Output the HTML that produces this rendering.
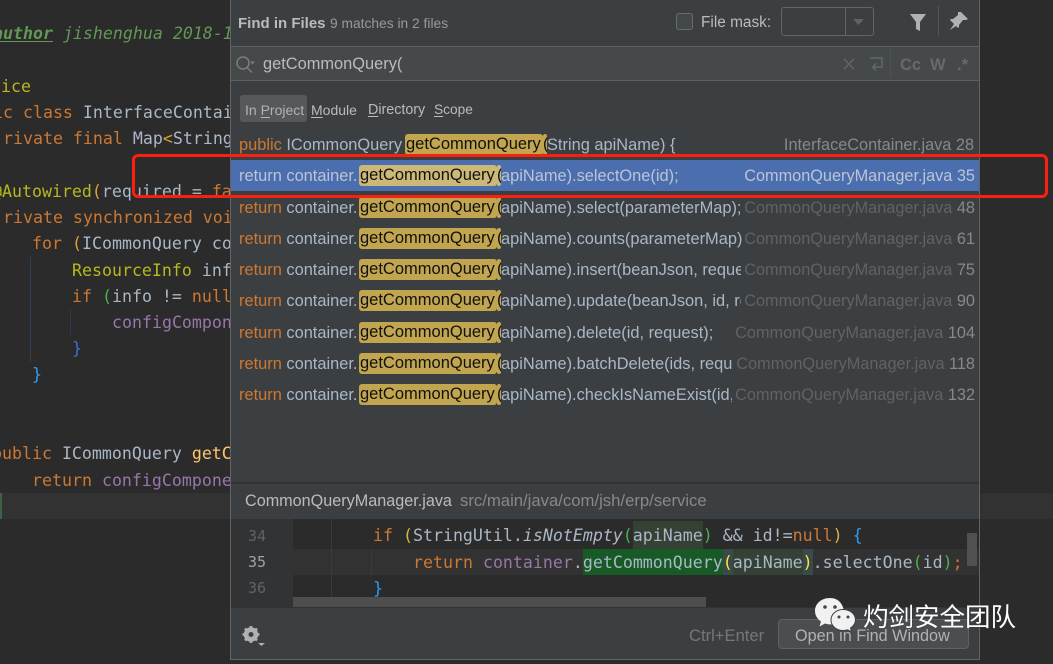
<!DOCTYPE html>
<html><head><meta charset="utf-8"><style>
*{margin:0;padding:0;box-sizing:border-box}
html,body{width:1053px;height:664px;overflow:hidden;background:#2b2b2b}
body{position:relative;font-family:"Liberation Sans",sans-serif}
.a,.c,.u,.r,.h{position:absolute;white-space:pre}
.c{font:16.6px/28px "DejaVu Sans Mono","Liberation Mono",monospace;color:#a9b7c6}
.u{font-size:16.4px;line-height:26px;color:#a9b7c6}
.r{font-size:16.3px;line-height:26px;color:#888;text-align:right}
.h{background:#c2a54f;border-radius:3px;color:#111;font-size:16.5px;line-height:21px;height:21px;padding-left:1px}
.h.q{padding-left:0;overflow:hidden}
.o{color:#cc7832}.y{color:#b8b81e}.p{color:#9876aa}.g{color:#629755}.m{color:#ffc66d}
u{text-underline-offset:2px}
</style></head><body>
<div class="a" style="left:0;top:493px;width:1053px;height:26px;background:#323232"></div>
<div class="a" style="left:0;top:493px;width:2px;height:26px;background:#40604a"></div>
<div class="a" style="left:30px;top:257px;width:1px;height:105px;background:#2f4050"></div>
<div class="a" style="left:70px;top:309px;width:1px;height:26px;background:#2f3a50"></div>

<div class="c g" style="left:-7px;top:20px;font-style:italic"><u style="font-weight:bold">author</u> jishenghua 2018-1</div>
<div class="c y" style="left:-19px;top:73px"> vice</div>
<div class="c" style="left:-7px;top:99px"><span class="o">ic class</span> InterfaceContai</div>
<div class="c" style="left:3px;top:125px"><span class="o">rivate final</span> Map<span style="color:#d4a72c">&lt;</span>String</div>
<div class="c" style="left:-8px;top:178px"><span class="y">@Autowired</span><span style="color:#e0a030">(</span>required = <span class="o">fa</span></div>
<div class="c o" style="left:3px;top:204px">rivate synchronized voi</div>
<div class="c" style="left:32px;top:230px"><span class="o">for</span> <span style="color:#e0a030">(</span>ICommonQuery co</div>
<div class="c" style="left:72px;top:257px"><span class="y">ResourceInfo</span> inf</div>
<div class="c" style="left:72px;top:283px"><span class="o">if</span> <span style="color:#4caf50">(</span>info != <span class="o">null</span></div>
<div class="c p" style="left:112px;top:309px">configCompon</div>
<div class="c" style="left:72px;top:335px;color:#3f6fd0">}</div>
<div class="c" style="left:32px;top:361px;color:#2f9bf0">}</div>
<div class="c" style="left:-8px;top:440px"><span class="o">public</span> ICommonQuery <span class="m">getC</span></div>
<div class="c" style="left:32px;top:467px"><span class="o">return</span> <span class="p">configCompone</span></div>

<!-- dialog -->
<div class="a" style="left:230px;top:0;width:750px;height:660px;background:#3c3f41;border:1px solid #646464;border-top:0"></div>
<div class="a" style="left:231px;top:46px;width:748px;height:35px;background:#45494a;border-top:1px solid #5e6060;border-bottom:1px solid #5e6060"></div>

<div class="u" style="left:238px;top:11px;font-size:15px;font-weight:bold;color:#bbb">Find in Files</div>
<div class="u" style="left:330px;top:11px;font-size:13.8px;color:#999">9 matches in 2 files</div>
<div class="a" style="left:676px;top:13px;width:17px;height:17px;background:#43494a;border:1px solid #6b6b6b;border-radius:3px"></div>
<div class="u" style="left:701px;top:10px;font-size:15.4px;color:#bbb">File mask:</div>
<div class="a" style="left:781px;top:7px;width:93px;height:29px;border:1px solid #646464;border-radius:3px"></div>
<div class="a" style="left:845px;top:7px;width:1px;height:29px;background:#646464"></div>
<svg class="a" style="left:0;top:0" width="1053" height="664" viewBox="0 0 1053 664">
<path d="M853 19h11l-5.500 6z" fill="#5f6365"/>
<path d="M910 14h16l-6 8v9l-4-2v-7z" fill="#afb1b3"/>
<rect x="938" y="6" width="1" height="30" fill="#555"/>
<path d="M961 12l7 7-2 1h-3l-4 5v2l-1 1-8-8 1-1h2l5-4v-3zM954 24l-4 6 6-4z" fill="#afb1b3"/>
<circle cx="243" cy="63" r="6" fill="none" stroke="#7a7e80" stroke-width="1.500"/>
<path d="M247 67.500l5 5" stroke="#7a7e80" stroke-width="1.500"/>
<path d="M250 61.500h5l-2.500 3z" fill="#7a7e80"/>
<path d="M844 59l10 10M854 59l-10 10" stroke="#62676a" stroke-width="1.300"/>
<path d="M870 58h12v9h-9m3-3.500l-3.500 3.500 3.500 3.500" fill="none" stroke="#62676a" stroke-width="1.500"/>
<rect x="890" y="50" width="1" height="27" fill="#505354"/>
</svg>
<div class="u" style="left:263px;top:51px;color:#bbb">getCommonQuery(</div>
<div class="u" style="left:900px;top:52px;font-weight:bold;font-size:16.5px;color:#666a6c">Cc</div>
<div class="u" style="left:930px;top:52px;font-weight:bold;font-size:16.5px;color:#666a6c">W</div>
<div class="u" style="left:957px;top:52px;font-weight:bold;font-size:16.5px;color:#666a6c">.*</div>

<div class="a" style="left:240px;top:95px;width:67px;height:27px;background:#55595c;border-radius:3px"></div>
<div class="u" style="left:245px;top:97px;font-size:14px;color:#b0b3b5">In <u>P</u>roject</div>
<div class="u" style="left:311px;top:97px;font-size:14px;color:#bbb"><u>M</u>odule</div>
<div class="u" style="left:368px;top:97px;font-size:14.3px;color:#bbb"><u>D</u>irectory</div>
<div class="u" style="left:434px;top:97px;font-size:13.7px;color:#bbb"><u>S</u>cope</div>

<!-- rows -->
<div class="a" style="left:231px;top:160px;width:748px;height:31px;background:#4b6eaf"></div>

<div class="h" style="left:405px;top:134px;width:138px">getCommonQuery</div><div class="h q" style="left:543px;top:134px;width:4px">(</div>
<div class="u" style="left:239px;top:132px"><span class="o">public</span> ICommonQuery</div>
<div class="u" style="left:547px;top:132px">String apiName) {</div>
<div class="r" style="right:79px;top:132px">InterfaceContainer.java 28</div>

<div class="h" style="left:359px;top:165px;width:138px;background:#cdb977">getCommonQuery</div><div class="h q" style="left:497px;top:165px;width:4px;background:#cdb977">(</div>
<div class="u" style="left:239px;top:163px;color:#bbc4d4">return container.</div>
<div class="u" style="left:501px;top:163px;color:#bbc4d4">apiName).selectOne(id);</div>
<div class="r" style="right:78px;top:163px;color:#bbc4d4">CommonQueryManager.java 35</div>

<div class="h" style="left:359px;top:197px;width:138px">getCommonQuery</div><div class="h q" style="left:497px;top:197px;width:4px">(</div>
<div class="u" style="left:239px;top:195px"><span class="o">return</span> container.</div>
<div class="u" style="left:501px;top:195px;width:241px;overflow:hidden">apiName).select(parameterMap);</div>
<div class="r" style="right:78px;top:195px;color:#5f6365">CommonQueryManager.java <span style="color:#888">48</span></div>

<div class="h" style="left:359px;top:228px;width:138px">getCommonQuery</div><div class="h q" style="left:497px;top:228px;width:4px">(</div>
<div class="u" style="left:239px;top:226px"><span class="o">return</span> container.</div>
<div class="u" style="left:501px;top:226px;width:241px;overflow:hidden">apiName).counts(parameterMap);</div>
<div class="r" style="right:78px;top:226px;color:#5f6365">CommonQueryManager.java <span style="color:#888">61</span></div>

<div class="h" style="left:359px;top:259px;width:138px">getCommonQuery</div><div class="h q" style="left:497px;top:259px;width:4px">(</div>
<div class="u" style="left:239px;top:257px"><span class="o">return</span> container.</div>
<div class="u" style="left:501px;top:257px;width:240px;overflow:hidden">apiName).insert(beanJson, request);</div>
<div class="r" style="right:78px;top:257px;color:#5f6365">CommonQueryManager.java <span style="color:#888">75</span></div>

<div class="h" style="left:359px;top:290px;width:138px">getCommonQuery</div><div class="h q" style="left:497px;top:290px;width:4px">(</div>
<div class="u" style="left:239px;top:288px"><span class="o">return</span> container.</div>
<div class="u" style="left:501px;top:288px;width:240px;overflow:hidden">apiName).update(beanJson, id, request);</div>
<div class="r" style="right:78px;top:288px;color:#5f6365">CommonQueryManager.java <span style="color:#888">90</span></div>

<div class="h" style="left:359px;top:322px;width:138px">getCommonQuery</div><div class="h q" style="left:497px;top:322px;width:4px">(</div>
<div class="u" style="left:239px;top:320px"><span class="o">return</span> container.</div>
<div class="u" style="left:501px;top:320px">apiName).delete(id, request);</div>
<div class="r" style="right:78px;top:320px;color:#5f6365">CommonQueryManager.java <span style="color:#888">104</span></div>

<div class="h" style="left:359px;top:353px;width:138px">getCommonQuery</div><div class="h q" style="left:497px;top:353px;width:4px">(</div>
<div class="u" style="left:239px;top:351px"><span class="o">return</span> container.</div>
<div class="u" style="left:501px;top:351px;width:231px;overflow:hidden">apiName).batchDelete(ids, request);</div>
<div class="r" style="right:78px;top:351px;color:#5f6365">CommonQueryManager.java <span style="color:#888">118</span></div>

<div class="h" style="left:359px;top:384px;width:138px">getCommonQuery</div><div class="h q" style="left:497px;top:384px;width:4px">(</div>
<div class="u" style="left:239px;top:382px"><span class="o">return</span> container.</div>
<div class="u" style="left:501px;top:382px;width:231px;overflow:hidden">apiName).checkIsNameExist(id, request);</div>
<div class="r" style="right:78px;top:382px;color:#5f6365">CommonQueryManager.java <span style="color:#888">132</span></div>

<!-- preview -->
<div class="a" style="left:231px;top:482px;width:748px;height:2px;background:#323232"></div>
<div class="u" style="left:245px;top:488px;font-size:16.2px;color:#bbb">CommonQueryManager.java</div>
<div class="u" style="left:460px;top:488px;font-size:16.7px;color:#888">src/main/java/com/jsh/erp/service</div>
<div class="a" style="left:231px;top:519px;width:748px;height:88px;background:#2b2b2b"></div>
<div class="a" style="left:231px;top:519px;width:62px;height:88px;background:#313335"></div>
<div class="a" style="left:293px;top:549px;width:686px;height:26px;background:#323232"></div>
<div class="a" style="left:331px;top:519px;width:1px;height:88px;background:#3a3a3a"></div>
<div class="a" style="left:371px;top:549px;width:1px;height:26px;background:#3a3a3a"></div>
<div class="a" style="left:633px;top:521px;width:70px;height:28px;background:#344134"></div>
<div class="a" style="left:583px;top:549px;width:140px;height:26px;background:#185a26"></div>
<div class="a" style="left:723px;top:549px;width:10px;height:26px;background:#3a4a4a"></div>
<div class="a" style="left:733px;top:549px;width:70px;height:26px;background:#344134"></div>
<div class="a" style="left:803px;top:549px;width:10px;height:26px;background:#3a4a4a"></div>
<div class="a" style="left:293px;top:597px;width:413px;height:10px;background:#4e4e4e"></div>
<div class="a" style="left:967px;top:533px;width:10px;height:33px;background:#505050"></div>
<div class="c" style="left:248px;top:522px;color:#606366;font-size:15px">34</div>
<div class="c" style="left:248px;top:548px;color:#a4a3a3;font-size:15px">35</div>
<div class="c" style="left:248px;top:574px;color:#606366;font-size:15px">36</div>
<div class="c" style="left:373px;top:522px"><span class="o">if</span> <span style="color:#d4b83c">(</span>StringUtil.<i>isNotEmpty</i><span style="color:#4caf50">(</span>apiName<span style="color:#4caf50">)</span> &amp;&amp; id!=<span class="o">null</span><span style="color:#d4b83c">)</span> <span style="color:#2f9bf0">{</span></div>
<div class="c" style="left:413px;top:549px"><span class="o">return</span> <span class="p">container</span>.getCommonQuery<span style="color:#ffe33c">(</span>apiName<span style="color:#ffe33c">)</span>.selectOne<span style="color:#4caf50">(</span>id<span style="color:#4caf50">)</span><span class="o">;</span></div>
<div class="c" style="left:373px;top:575px;color:#2f9bf0">}</div>

<!-- footer -->
<div class="a" style="left:231px;top:607px;width:748px;height:1px;background:#323232"></div>
<svg class="a" style="left:0;top:0" width="1053" height="664" viewBox="0 0 1053 664">
<circle cx="251" cy="634.500" r="5.500" fill="none" stroke="#afb1b3" stroke-width="3.500"/>
<path d="M251 626v17M242.500 634.500h17M245 628.500l12 12M257 628.500l-12 12" stroke="#afb1b3" stroke-width="2.600"/>
<circle cx="251" cy="634.500" r="2.500" fill="#3c3f41"/>
<path d="M258 643h7l-3.500 3z" fill="#afb1b3"/>
</svg>
<div class="u" style="left:689px;top:623px;font-size:16.6px;color:#777">Ctrl+Enter</div>
<div class="a" style="left:778px;top:619px;width:191px;height:30px;background:#4a4e50;border:1px solid #5e6264;border-radius:4px"></div>
<div class="u" style="left:795px;top:623px;font-size:16.2px;color:#b0b3b5">Open in Find Window</div>

<!-- red highlight -->
<div class="a" style="left:132px;top:154px;width:916px;height:44px;border:3.500px solid #fb1f10;border-radius:6px"></div>

<!-- watermark -->
<svg class="a" style="left:0;top:0" width="1053" height="664" viewBox="0 0 1053 664">
<path d="M830 598c-8.500 0-15 5.500-15 13 0 4.500 2.500 8 6 10.500l-1.500 5 5.500-3c2 .6 4 1 6 1 6 0 14-6 13-13-1-8-6-13.500-14-13.500z" fill="#f1f1f1"/>
<path d="M843 609.500c-6.500 0-12 4.500-12 10.500s5.500 10.500 12 10.500c1.500 0 3-.3 4.500-.7l4 2-1-3.800c3-2 5-4.800 5-8 0-6-5.500-10.500-12.500-10.500z" fill="#f1f1f1" stroke="#3c3f41" stroke-width="1"/>
<circle cx="825" cy="607" r="1.800" fill="#444"/><circle cx="835" cy="607" r="1.800" fill="#444"/>
<circle cx="839" cy="617" r="1.500" fill="#444"/><circle cx="848" cy="617" r="1.500" fill="#444"/>
</svg>
<div class="a" style="left:863px;top:601px;font:25.500px/30px 'Noto Sans CJK SC','WenQuanYi Zen Hei',sans-serif;color:#fff;text-shadow:0 0 1px #333">灼剑安全团队</div>
</body></html>
